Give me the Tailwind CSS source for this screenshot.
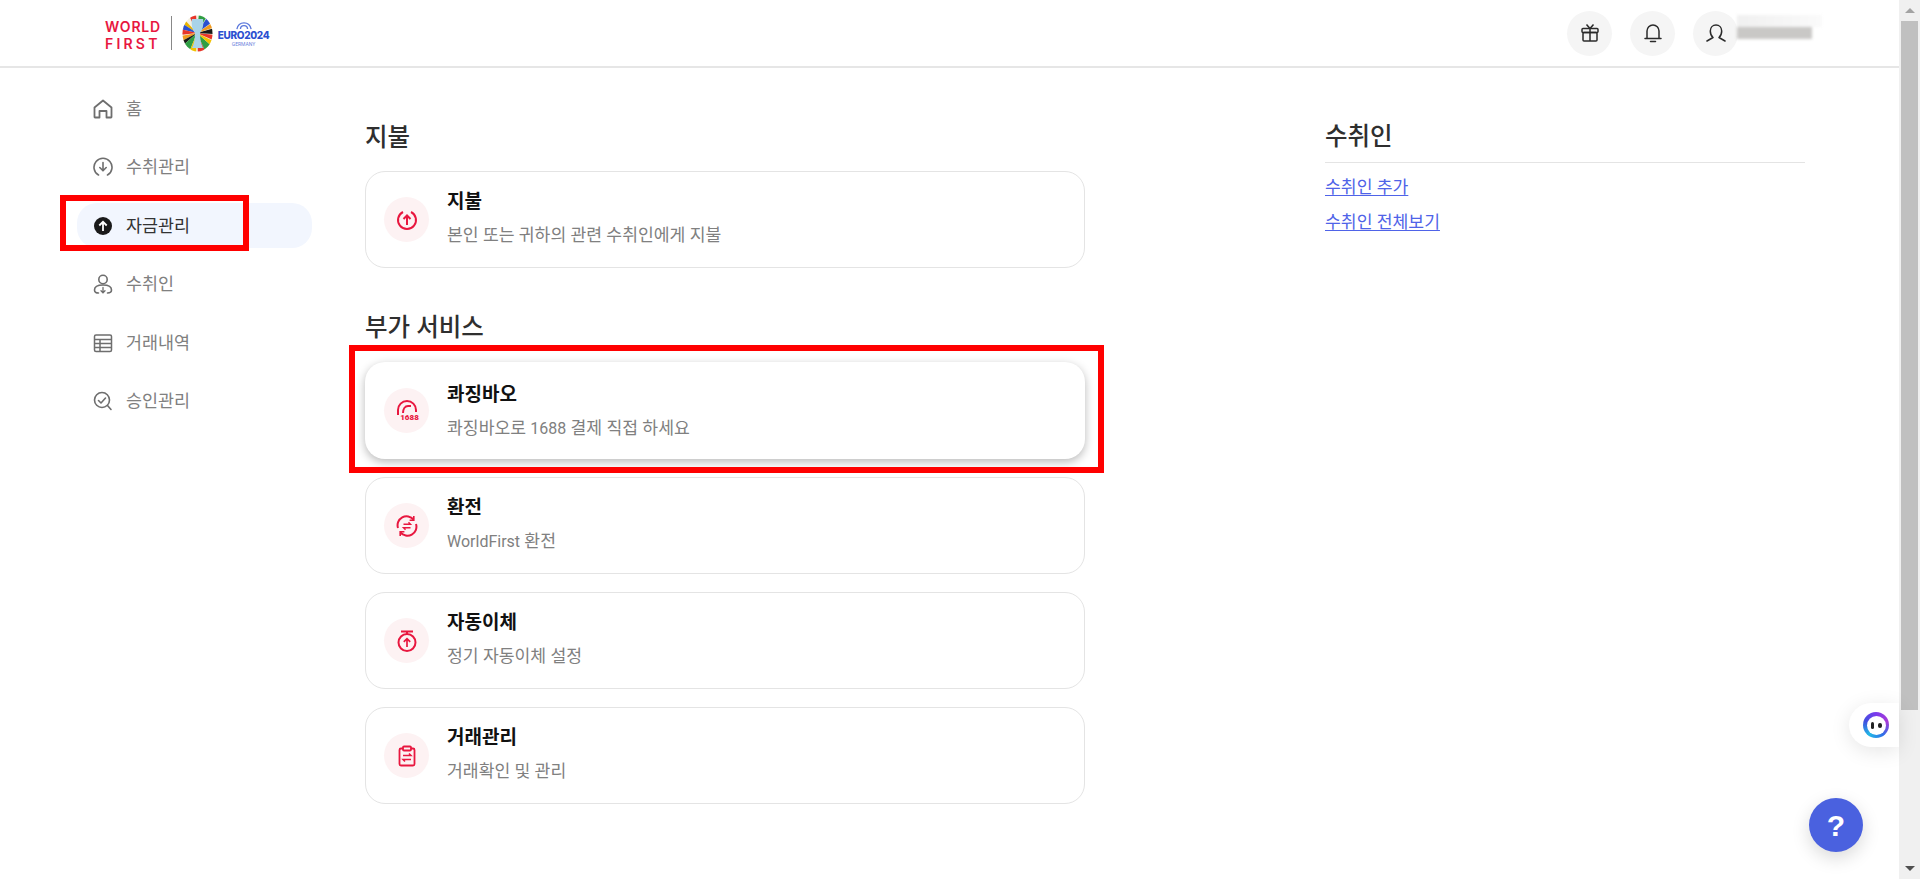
<!DOCTYPE html>
<html lang="ko">
<head>
    <meta charset="UTF-8">
    <meta name="viewport" content="width=device-width, initial-scale=1.0">
    <script src="https://cdn.jsdelivr.net/npm/@tailwindcss/browser@4"></script>
    <title>자금관리</title>
</head>
<body class="bg-white overflow-hidden font-['Roboto','Noto_Sans_CJK_KR',sans-serif]">
<div class="relative flex h-[879px] w-[1920px] overflow-hidden">

  <!-- page -->
  <div class="w-[1899px] flex flex-col">

    <!-- header -->
    <header class="h-[68px] shrink-0 border-b-2 border-[#e6e6e6] flex items-center justify-between pl-[105px] pr-[92px]">
      <div class="flex items-center">
        <div class="w-[57px] mt-[3px] text-[#e8173f] font-['Inter',sans-serif] font-semibold text-[14px] leading-[17px]">
          <div class="tracking-[0.8px]">WORLD</div>
          <div class="tracking-[3.2px]">FIRST</div>
        </div>
        <div class="w-px h-[34px] bg-[#888] ml-[9px]"></div>
        <!-- trophy -->
        <svg class="ml-[10px]" width="31" height="37" viewBox="0 0 31 37">
          <defs><clipPath id="egg"><ellipse cx="15.5" cy="18.5" rx="15" ry="18"/></clipPath></defs>
          <g clip-path="url(#egg)">
            <rect width="31" height="37" fill="#f4f0e0"/>
            <path d="M15 18-2 0V7Z" fill="#e8b400"/>
            <path d="M15 18-2 7V14Z" fill="#2a4fd0"/>
            <path d="M15 18-2 14V20Z" fill="#e8352a"/>
            <path d="M15 18-2 21V27Z" fill="#f29a1f"/>
            <path d="M15 18-2 27V33Z" fill="#1a1a1a"/>
            <path d="M15 18-2 33V40H6Z" fill="#2f9e44"/>
            <path d="M15 18 6 40H14Z" fill="#f2c200"/>
            <path d="M15 18 16 40H25Z" fill="#e8352a"/>
            <path d="M15 18 25 40H33V34Z" fill="#2f9e44"/>
            <path d="M15 18 33 34V27Z" fill="#f2c200"/>
            <path d="M15 18 33 20V26Z" fill="#e8352a"/>
            <path d="M15 18 33 13V19Z" fill="#1a1a1a"/>
            <path d="M15 18 33 6V12Z" fill="#f29a1f"/>
            <path d="M15 18 28 -2H33V5Z" fill="#2a4fd0"/>
            <path d="M15 18 6 -2H14Z" fill="#e8352a"/>
            <path d="M15 18 17 -2H27Z" fill="#2f9e44"/>
          </g>
          <path d="M10 4h11c1 6-.5 11-3 14 0 6 1 11 3 15H10c2-4 3-9 3-15-2.500-3-4-8-3-14Z" fill="#a9d3e8"/>
        </svg>
        <div class="ml-[5px] mt-[3px] w-[51px] flex flex-col items-center text-[#2b4fd0]">
          <svg width="18" height="8" viewBox="0 0 20 9" fill="none" stroke="#5b78dc" stroke-width="1.500"><path d="M2 8C3 3 6 1 10 1s7 2 8 7"/><path d="M6 8c0-3 1.500-4 4-4s4 1 4 4"/></svg>
          <div class="text-[10px] leading-[11px] font-extrabold tracking-[-0.3px] font-['Inter',sans-serif] whitespace-nowrap">EURO2024</div>
          <div class="text-[5px] leading-[7px] text-[#6d84dd]">GERMANY</div>
        </div>
      </div>

      <div class="relative flex items-center gap-[18px] w-[240px]">
        <div class="w-[45px] h-[45px] rounded-full bg-[#f5f5f5] flex items-center justify-center">
          <svg width="20" height="20" viewBox="0 0 20 20" fill="none" stroke="#2b2b2b" stroke-width="1.500"><rect x="2" y="5.500" width="16" height="4" rx="1"/><rect x="3" y="9.500" width="14" height="8.500" rx="1"/><path d="M10 5.500V18M6.500 1.500 10 5.500l3.500-4"/></svg>
        </div>
        <div class="w-[45px] h-[45px] rounded-full bg-[#f5f5f5] flex items-center justify-center">
          <svg width="20" height="22" viewBox="0 0 20 22" fill="none" stroke="#2b2b2b" stroke-width="1.500" stroke-linecap="round"><path d="M4 16V9a6 6 0 0 1 12 0v7M2 16.500h16M7.500 19.500h5" /></svg>
        </div>
        <div class="w-[45px] h-[45px] rounded-full bg-[#f5f5f5] flex items-center justify-center">
          <svg width="20" height="20" viewBox="0 0 20 20" fill="none" stroke="#2b2b2b" stroke-width="1.500" stroke-linecap="round" stroke-linejoin="round"><path d="M1 18 7 14.500C5.300 13 4.300 11 4.300 8 4.300 4.500 6.800 2 10 2s5.700 2.500 5.700 6c0 3-1 5-2.700 6.500l6 3.500"/></svg>
        </div>
        <!-- blurred account name -->
        <div class="absolute left-[170px] top-[4px] w-[85px] h-[25px] blur-[1.5px]">
          <div class="h-[12px] w-full bg-gradient-to-r from-[#f0f0f0] to-[#fafafa]"></div>
          <div class="h-[12px] w-[75px] bg-[#c9c8c6]"></div>
        </div>
      </div>
    </header>

    <div class="flex flex-1 min-h-0">

      <!-- sidebar -->
      <nav class="w-[312px] shrink-0 pl-[77px] pt-[18px] flex flex-col gap-[13.500px] text-[17.400px] leading-[24px] text-[#808080]">
        <a class="h-[45px] flex items-center gap-[13px] pl-[16px]">
          <svg class="shrink-0" width="20" height="20" viewBox="0 0 20 20" fill="none" stroke="#6e6e6e" stroke-width="1.800" stroke-linejoin="round"><path d="M1.500 8.500 10 1.500l8.500 7V18a.5.5 0 0 1-.5.500h-4.500v-6.500h-7v6.500H2A.5.5 0 0 1 1.500 18Z"/></svg>
          <span>홈</span>
        </a>
        <a class="h-[45px] flex items-center gap-[13px] pl-[16px]">
          <svg class="shrink-0" width="20" height="20" viewBox="0 0 20 20" fill="none" stroke="#6e6e6e" stroke-width="1.600" stroke-linecap="round" stroke-linejoin="round"><path d="M5.500 18A9 9 0 1 1 14.500 18"/><path d="M10 5.500v8M6.800 10.500 10 13.800l3.200-3.300"/></svg>
          <span>수취관리</span>
        </a>
        <a class="h-[45px] flex items-center gap-[13px] pl-[16px] bg-[#f2f6fe] rounded-[20px] text-[#333]">
          <svg class="shrink-0" width="20" height="20" viewBox="0 0 20 20"><circle cx="10" cy="10" r="9" fill="#1a1a1a"/><path d="M10 15V6M6.300 9.500 10 5.800l3.700 3.700" fill="none" stroke="#fff" stroke-width="1.800"/></svg>
          <span>자금관리</span>
        </a>
        <a class="h-[45px] flex items-center gap-[13px] pl-[16px]">
          <svg class="shrink-0" width="20" height="20" viewBox="0 0 20 20" fill="none" stroke="#6e6e6e" stroke-width="1.600" stroke-linecap="round"><circle cx="10" cy="5.500" r="4.200"/><path d="M5.500 19C3 19 1.500 18 1.500 16c0-3 3-5 8.500-5s8.500 2 8.500 5c0 2-1.500 3-4 3"/><path d="M10 13.500v5M8 16.800l2 2 2-2" stroke-width="1.300"/></svg>
          <span>수취인</span>
        </a>
        <a class="h-[45px] flex items-center gap-[13px] pl-[16px]">
          <svg class="shrink-0" width="20" height="20" viewBox="0 0 20 20" fill="none" stroke="#6e6e6e" stroke-width="1.500"><rect x="1.500" y="2" width="17" height="16.500" rx="1.500"/><path d="M1.500 6.500h17M1.500 10.500h17M1.500 14.500h17M7 6.500v12"/></svg>
          <span>거래내역</span>
        </a>
        <a class="h-[45px] flex items-center gap-[13px] pl-[16px]">
          <svg class="shrink-0" width="20" height="20" viewBox="0 0 20 20" fill="none" stroke="#6e6e6e" stroke-width="1.600" stroke-linecap="round" stroke-linejoin="round"><circle cx="9" cy="9" r="7.500"/><path d="M5.500 9.500 8 12l4.500-5M14.500 14.500l3.500 4"/></svg>
          <span>승인관리</span>
        </a>
      </nav>

      <!-- main -->
      <main class="w-[720px] ml-[53px] shrink-0">
        <h2 class="h-[36px] mt-[52px] flex items-center text-[24.500px] font-medium text-[#2f2f2f]">지불</h2>
        <div class="mt-[15px] h-[97px] border border-[#e4e4e4] rounded-[20px] flex items-center pl-[18px]">
          <div class="w-[45px] h-[45px] rounded-full bg-[#fdf2f3] flex items-center justify-center shrink-0">
            <svg width="22" height="22" viewBox="0 0 22 22" fill="none" stroke="#e8173f" stroke-width="2"><path d="M7 3A9 9 0 1 0 15 3"/><path d="M11 16V7M7.500 10 11 6.500l3.500 3.500"/></svg>
          </div>
          <div class="ml-[18px] -mt-[3px]">
            <div class="text-[19px] leading-[24px] font-semibold text-[#111]">지불</div>
            <div class="mt-[10px] text-[17.200px] leading-[22px] text-[#808080]">본인 또는 귀하의 관련 수취인에게 지불</div>
          </div>
        </div>

        <h2 class="h-[36px] mt-[42px] flex items-center text-[24.500px] font-medium text-[#2f2f2f]">부가 서비스</h2>
        <div class="mt-[16px] h-[97px] bg-white rounded-[20px] shadow-[0_3px_10px_rgba(0,0,0,0.28)] flex items-center pl-[19px]">
          <div class="w-[45px] h-[45px] rounded-full bg-[#fdf2f3] flex flex-col items-center justify-center shrink-0">
            <svg class="-mb-[2px]" width="24" height="16" viewBox="0 0 24 16" fill="none" stroke="#e8173f" stroke-width="2"><path d="M3 16V11a9 9 0 0 1 18 0v2"/><path d="M8 14c0-4 2-7 5-7h3"/></svg>
            <div class="pl-[6px] text-[8px] leading-[9px] font-black text-[#e8173f] whitespace-nowrap">1688</div>
          </div>
          <div class="ml-[18px] mt-[1px]">
            <div class="text-[19px] leading-[24px] font-semibold text-[#111]">콰징바오</div>
            <div class="mt-[10px] text-[17.200px] leading-[22px] text-[#808080]">콰징바오로 <span class="text-[16px]">1688</span> 결제 직접 하세요</div>
          </div>
        </div>
        <div class="mt-[18px] h-[97px] border border-[#e4e4e4] rounded-[20px] flex items-center pl-[18px]">
          <div class="w-[45px] h-[45px] rounded-full bg-[#fdf2f3] flex items-center justify-center shrink-0">
            <svg width="22" height="22" viewBox="0 0 22 22" fill="none" stroke="#e8173f" stroke-width="2"><path d="M2 13A9 9 0 0 1 17.500 4.500M20 9A9 9 0 0 1 4.500 17.500"/><path d="M17.800 1v4.200h-4.200M4.200 21v-4.200h4.200" stroke-width="1.600"/><path d="M7.500 9.300h7l-2-2M14.500 12.700h-7l2 2" stroke-width="1.400"/></svg>
          </div>
          <div class="ml-[18px] -mt-[3px]">
            <div class="text-[19px] leading-[24px] font-semibold text-[#111]">환전</div>
            <div class="mt-[10px] text-[17.200px] leading-[22px] text-[#808080]"><span class="text-[16px]">WorldFirst</span> 환전</div>
          </div>
        </div>
        <div class="mt-[18px] h-[97px] border border-[#e4e4e4] rounded-[20px] flex items-center pl-[18px]">
          <div class="w-[45px] h-[45px] rounded-full bg-[#fdf2f3] flex items-center justify-center shrink-0">
            <svg width="22" height="22" viewBox="0 0 22 22" fill="none" stroke="#e8173f" stroke-width="2"><circle cx="11" cy="12.500" r="8.500"/><path d="M5 1.500h12M11 1.500v3" /><path d="M11 17V9M7.800 11.800 11 8.600l3.200 3.200" stroke-width="1.700"/></svg>
          </div>
          <div class="ml-[18px] -mt-[3px]">
            <div class="text-[19px] leading-[24px] font-semibold text-[#111]">자동이체</div>
            <div class="mt-[10px] text-[17.200px] leading-[22px] text-[#808080]">정기 자동이체 설정</div>
          </div>
        </div>
        <div class="mt-[18px] h-[97px] border border-[#e4e4e4] rounded-[20px] flex items-center pl-[18px]">
          <div class="w-[45px] h-[45px] rounded-full bg-[#fdf2f3] flex items-center justify-center shrink-0">
            <svg width="22" height="22" viewBox="0 0 22 22" fill="none" stroke="#e8173f" stroke-width="1.800"><path d="M7 3.500H5a1.500 1.500 0 0 0-1.500 1.500v14A1.500 1.500 0 0 0 5 20.500h12a1.500 1.500 0 0 0 1.500-1.500V5A1.500 1.500 0 0 0 17 3.500h-2"/><rect x="7" y="1.500" width="8" height="4" rx="1"/><path d="M7 10.500h8l-2-2M15 14.500H7l2 2" stroke-width="1.500"/></svg>
          </div>
          <div class="ml-[18px] -mt-[3px]">
            <div class="text-[19px] leading-[24px] font-semibold text-[#111]">거래관리</div>
            <div class="mt-[10px] text-[17.200px] leading-[22px] text-[#808080]">거래확인 및 관리</div>
          </div>
        </div>
      </main>

      <!-- recipients -->
      <aside class="w-[480px] ml-[240px] shrink-0">
        <h2 class="h-[36px] mt-[51px] flex items-center text-[24.500px] font-medium text-[#2f2f2f]">수취인</h2>
        <div class="mt-[7px] border-t border-[#e4e4e4] pt-[13px] flex flex-col items-start gap-[13px] text-[17.200px] leading-[22px] text-[#4f63e8]">
          <a class="underline underline-offset-2">수취인 추가</a>
          <a class="underline underline-offset-2">수취인 전체보기</a>
        </div>
      </aside>
    </div>
  </div>

  <!-- scrollbar -->
  <div class="w-[21px] shrink-0 bg-[#f0f0f0] flex flex-col items-center">
    <div class="h-[21px] flex items-center justify-center"><div class="w-0 h-0 border-x-[5px] border-x-transparent border-b-[5px] border-b-[#a3a3a3]"></div></div>
    <div class="w-[17px] h-[689px] bg-[#c0c0c0]"></div>
    <div class="mt-auto h-[21px] flex items-center justify-center"><div class="w-0 h-0 border-x-[5px] border-x-transparent border-t-[5px] border-t-[#505050]"></div></div>
  </div>

  <!-- red annotation boxes -->
  <div class="absolute left-[60px] top-[195px] w-[189px] h-[56px] border-[6px] border-[#ff0000]"></div>
  <div class="absolute left-[349px] top-[345px] w-[755px] h-[128px] border-[6px] border-[#ff0000]"></div>

  <!-- chat widget -->
  <div class="absolute left-[1849px] top-[703px] w-[50px] h-[44px] bg-white rounded-l-[22px] shadow-[0_4px_20px_rgba(0,0,0,0.1)] flex items-center pl-[14px]">
    <div class="w-[26px] h-[26px] rounded-full bg-[conic-gradient(#7c3aed,#a83ad6,#2f6fe8,#22b8e6,#3f51e0,#7c3aed)] flex items-center justify-center">
      <div class="w-[19px] h-[19px] rounded-full bg-white flex items-center justify-center gap-[4px]">
        <div class="w-[3px] h-[7px] rounded-full bg-[#222]"></div>
        <div class="w-[4px] h-[5px] rounded-full bg-[#222]"></div>
      </div>
    </div>
  </div>

  <!-- help button -->
  <div class="absolute left-[1809px] top-[798px] w-[54px] h-[54px] rounded-full bg-[#4a61df] shadow-[0_6px_18px_rgba(0,0,0,0.15)] flex items-center justify-center text-white text-[30px] font-bold font-['Liberation_Sans',sans-serif]">?</div>
</div>
</body>
</html>
